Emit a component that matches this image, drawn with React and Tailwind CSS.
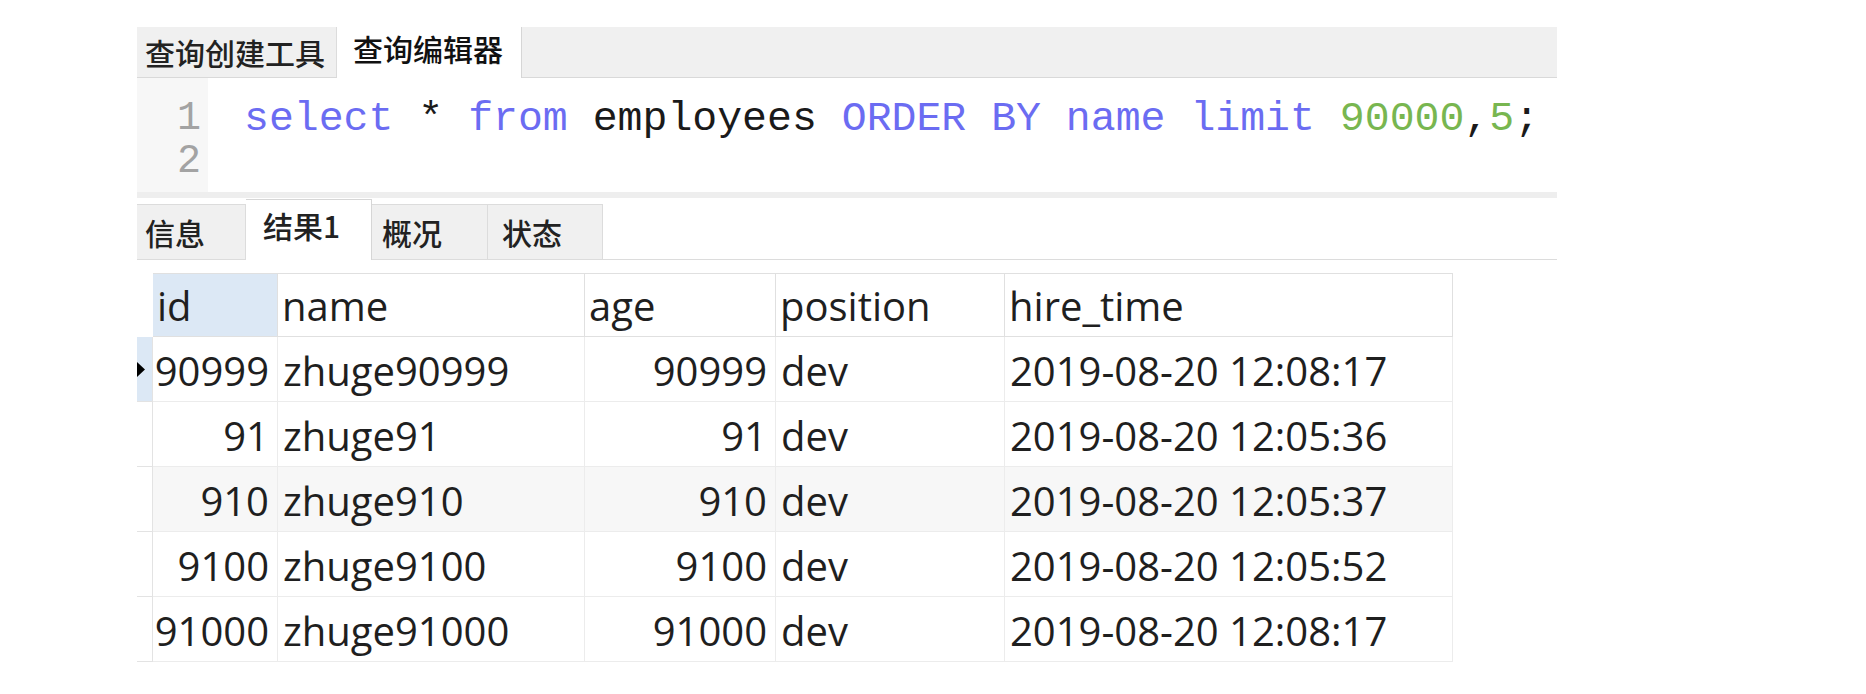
import React from 'react';

const cjk = { fontFamily: '"Noto Sans CJK SC", "Noto Sans", sans-serif' };

const columns = [
  { key: 'id', label: 'id', width: 'w-[125px]', align: 'right' },
  { key: 'name', label: 'name', width: 'w-[307px]', align: 'left' },
  { key: 'age', label: 'age', width: 'w-[191px]', align: 'right' },
  { key: 'position', label: 'position', width: 'w-[229px]', align: 'left' },
  { key: 'hire_time', label: 'hire_time', width: 'w-[448px]', align: 'left' },
];

const rows = [
  { id: '90999', name: 'zhuge90999', age: '90999', position: 'dev', hire_time: '2019-08-20 12:08:17' },
  { id: '91', name: 'zhuge91', age: '91', position: 'dev', hire_time: '2019-08-20 12:05:36' },
  { id: '910', name: 'zhuge910', age: '910', position: 'dev', hire_time: '2019-08-20 12:05:37' },
  { id: '9100', name: 'zhuge9100', age: '9100', position: 'dev', hire_time: '2019-08-20 12:05:52' },
  { id: '91000', name: 'zhuge91000', age: '91000', position: 'dev', hire_time: '2019-08-20 12:08:17' },
];

const App = () => {
  return (
    <div className="w-[1866px] h-[694px] bg-white pt-[27px] pl-[137px] overflow-hidden">
      <div className="w-[1420px]">
        {/* top tabs */}
        <div className="flex h-[51px] bg-[#f0f0f0] border-b border-[#d9d9d9]" style={cjk}>
          <div className="w-[200px] flex items-center pl-[8px] text-[30px] font-medium text-[#222] border-r border-[#dcdcdc]">
            查询创建工具
          </div>
          <div className="w-[185px] flex items-center pl-[16px] pb-[8px] text-[30px] font-medium text-[#111] bg-white border-r border-[#d6d6d6] -mb-px">
            查询编辑器
          </div>
        </div>

        {/* editor */}
        <div className="flex h-[114px] bg-white" style={{ fontFamily: '"Liberation Mono", monospace' }}>
          <div className="w-[71px] bg-[#f7f7f7] pt-[19px] pr-[7px] text-right text-[40px] leading-[43px] text-[#a3a3a3]">
            <div>1</div>
            <div>2</div>
          </div>
          <div className="pl-[36px] pt-[19px] text-[41.5px] leading-[43px] whitespace-pre text-[#1a1a1a]">
            <span className="text-[#6b6cf2]">select</span>{' * '}
            <span className="text-[#6b6cf2]">from</span>{' employees '}
            <span className="text-[#6b6cf2]">ORDER BY name limit</span>{' '}
            <span className="text-[#78b650]">90000</span>,<span className="text-[#78b650]">5</span>;
          </div>
        </div>

        <div className="h-[6px] bg-[#eeeeee]"></div>

        {/* result tabs */}
        <div className="flex items-end h-[62px] border-b border-[#dcdcdc] text-[30px] font-medium text-[#222]" style={cjk}>
          <div className="w-[109px] h-[55px] flex items-center pl-[8px] bg-[#f0f0f0] border-r border-t border-[#dcdcdc]">信息</div>
          <div className="w-[126px] h-[61px] flex items-center pl-[17px] pb-[10px] bg-white border-t border-r border-[#d6d6d6] -mb-px">结果1</div>
          <div className="w-[116px] h-[55px] flex items-center pl-[10px] bg-[#f0f0f0] border-r border-t border-[#dcdcdc]">概况</div>
          <div className="w-[115px] h-[55px] flex items-center pl-[14px] bg-[#f0f0f0] border-r border-t border-[#dcdcdc]">状态</div>
        </div>

        {/* grid */}
        <div className="mt-[13px] w-fit text-[40px] text-[#1f1f1f]" style={{ fontFamily: '"Open Sans", "Liberation Sans", sans-serif' }}>
          <div className="flex h-[64px]">
            <div className="w-[16px]"></div>
            {columns.map((c, i) => (
              <div
                key={c.key}
                className={`${c.width} flex items-center pl-[4px] pt-[2px] border-t border-r border-b border-[#e0e0e0] ${i === 0 ? 'bg-[#dce8f5]' : 'bg-white'}`}
              >
                {c.label}
              </div>
            ))}
          </div>
          {rows.map((r, ri) => (
            <div key={ri} className={`flex h-[65px] ${ri === 2 ? 'bg-[#f7f7f7]' : 'bg-white'}`}>
              <div className={`w-[16px] relative border-r border-b border-[#e3e3e3] ${ri === 0 ? 'bg-[#dce8f5]' : 'bg-white'}`}>
                {ri === 0 && (
                  <svg className="absolute left-0 top-[25px]" width="8" height="15" viewBox="0 0 8 15">
                    <path d="M0 0 L8 7.5 L0 15 Z" fill="#000" />
                  </svg>
                )}
              </div>
              {columns.map((c) => (
                <div
                  key={c.key}
                  className={`${c.width} flex items-center pt-[4px] border-r border-b border-[#ececec] ${c.align === 'right' ? 'justify-end pr-[8px]' : 'pl-[5px]'}`}
                >
                  {r[c.key]}
                </div>
              ))}
            </div>
          ))}
        </div>
      </div>
    </div>
  );
};

export default App;
